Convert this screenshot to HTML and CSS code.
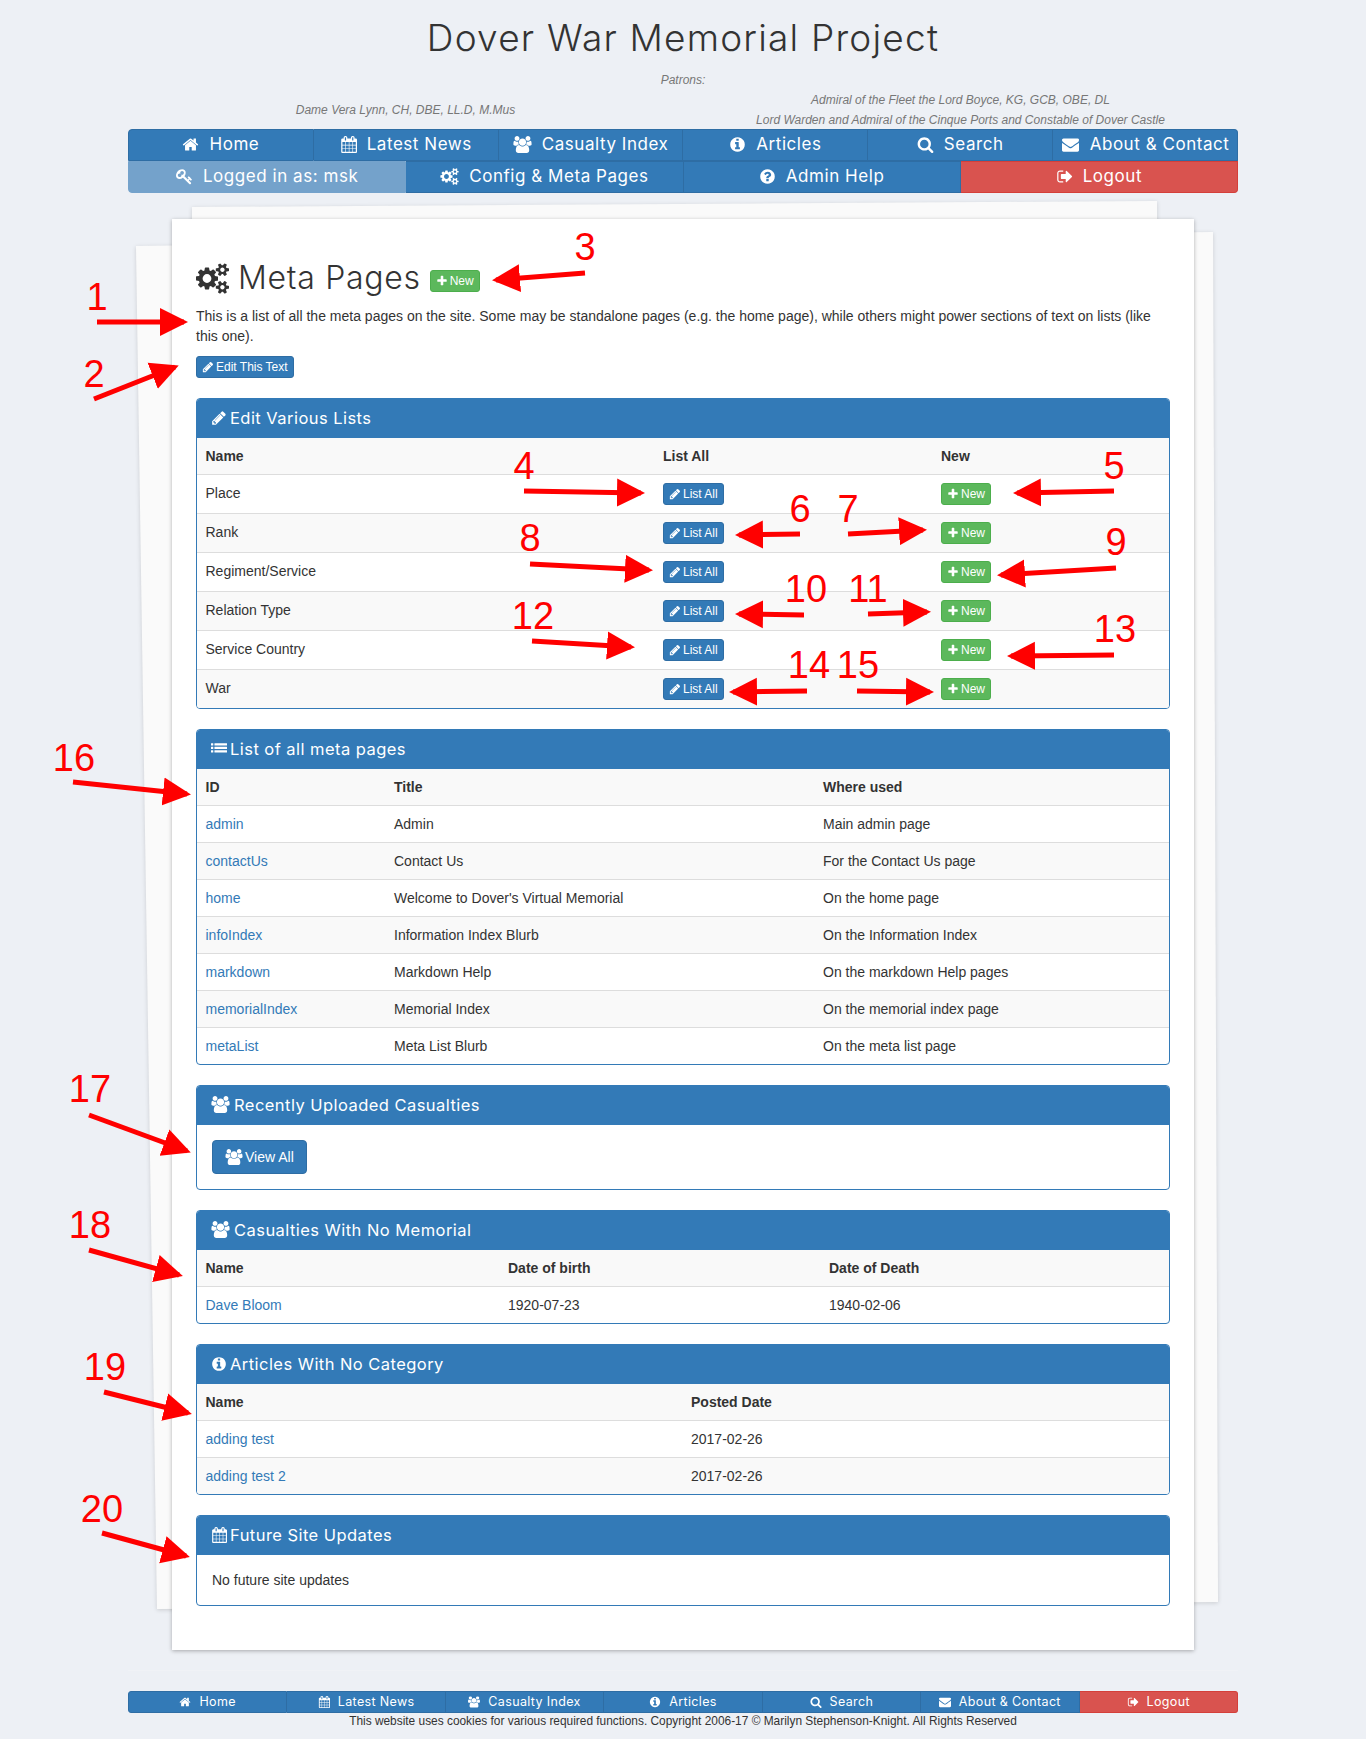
FILE: index.html
```html
<!DOCTYPE html>
<html lang="en">
<head>
<meta charset="utf-8">
<title>Dover War Memorial Project</title>
<link rel="stylesheet" href="styles.css">
</head>
<body>
<svg class="icon-defs" aria-hidden="true">
  <symbol id="i-home" viewBox="0 0 1792 1792"><path d="M1472 992v480q0 26-19 45t-45 19h-384v-384h-256v384h-384q-26 0-45-19t-19-45v-480q0-1 .5-3t.5-3l575-474 575 474q1 2 1 6zm223-69l-62 74q-8 9-21 11h-3q-13 0-21-7l-692-577-692 577q-12 8-24 7-13-2-21-11l-62-74q-8-10-7-23.5t11-21.5l719-599q32-26 76-26t76 26l244 204v-195q0-14 9-23t23-9h192q14 0 23 9t9 23v408l219 182q10 8 11 21.5t-7 23.5z"/></symbol>
  <symbol id="i-cal" viewBox="0 0 1664 1792"><path d="M192 1664h288v-288h-288v288zm352 0h320v-288h-320v288zm-352-352h288v-320h-288v320zm352 0h320v-320h-320v320zm-352-384h288v-288h-288v288zm736 736h320v-288h-320v288zm-384-736h320v-288h-320v288zm768 736h288v-288h-288v288zm-384-352h320v-320h-320v320zm-352-864v-288q0-13-9.5-22.5t-22.5-9.5h-64q-13 0-22.5 9.5t-9.5 22.5v288q0 13 9.5 22.5t22.5 9.5h64q13 0 22.5-9.5t9.5-22.5zm736 864h288v-320h-288v320zm-384-384h320v-288h-320v288zm384 0h288v-288h-288v288zm32-480v-288q0-13-9.5-22.5t-22.5-9.5h-64q-13 0-22.5 9.5t-9.5 22.5v288q0 13 9.5 22.5t22.5 9.5h64q13 0 22.5-9.5t9.5-22.5zm384-64v1280q0 52-38 90t-90 38h-1408q-52 0-90-38t-38-90v-1280q0-52 38-90t90-38h128v-96q0-66 47-113t113-47h64q66 0 113 47t47 113v96h384v-96q0-66 47-113t113-47h64q66 0 113 47t47 113v96h128q52 0 90 38t38 90z"/></symbol>
  <symbol id="i-users" viewBox="0 0 1920 1792"><path d="M593 896q-162 5-265 128h-134q-82 0-138-40.5t-56-118.5q0-353 124-353 6 0 43.5 21t97.5 42.5 119 21.5q67 0 133-23-5 37-5 66 0 139 81 256zm1071 637q0 120-73 189.5t-194 69.5h-874q-121 0-194-69.5t-73-189.5q0-53 3.5-103.5t14-109 26.5-108.5 43-97.5 62-81 85.5-53.5 111.5-20q10 0 43 21.5t73 48 107 48 135 21.5 135-21.5 107-48 73-48 43-21.5q61 0 111.5 20t85.5 53.5 62 81 43 97.5 26.5 108.5 14 109 3.5 103.5zm-1024-1277q0 106-75 181t-181 75-181-75-75-181 75-181 181-75 181 75 75 181zm704 384q0 159-112.5 271.5t-271.5 112.5-271.5-112.5-112.5-271.5 112.5-271.5 271.5-112.5 271.5 112.5 112.5 271.5zm576 225q0 78-56 118.5t-138 40.5h-134q-103-123-265-128 81-117 81-256 0-29-5-66 66 23 133 23 59 0 119-21.5t97.5-42.5 43.5-21q124 0 124 353zm-128-609q0 106-75 181t-181 75-181-75-75-181 75-181 181-75 181 75 75 181z"/></symbol>
  <symbol id="i-info" viewBox="0 0 1792 1792"><path d="M1152 1376v-160q0-14-9-23t-23-9h-96v-512q0-14-9-23t-23-9h-320q-14 0-23 9t-9 23v160q0 14 9 23t23 9h96v320h-96q-14 0-23 9t-9 23v160q0 14 9 23t23 9h448q14 0 23-9t9-23zm-128-896v-160q0-14-9-23t-23-9h-192q-14 0-23 9t-9 23v160q0 14 9 23t23 9h192q14 0 23-9t9-23zm640 416q0 209-103 385.5t-279.5 279.5-385.5 103-385.5-103-279.5-279.5-103-385.5 103-385.5 279.5-279.5 385.5-103 385.5 103 279.5 279.5 103 385.5z"/></symbol>
  <symbol id="i-search" viewBox="0 0 1792 1792"><path d="M1216 832q0-185-131.5-316.5t-316.5-131.5-316.5 131.5-131.5 316.5 131.5 316.5 316.5 131.5 316.5-131.5 131.5-316.5zm512 832q0 52-38 90t-90 38q-54 0-90-38l-343-342q-179 124-399 124-143 0-273.5-55.5t-225-150-150-225-55.5-273.5 55.5-273.5 150-225 225-150 273.5-55.5 273.5 55.5 225 150 150 225 55.5 273.5q0 220-124 399l343 343q37 37 37 90z"/></symbol>
  <symbol id="i-mail" viewBox="0 0 1792 1792"><path d="M1792 710v794q0 66-47 113t-113 47h-1472q-66 0-113-47t-47-113v-794q44 49 101 87 362 246 497 345 57 42 92.5 65.5t94.5 48 110 24.5h2q51 0 110-24.5t94.5-48 92.5-65.5q170-123 498-345 57-39 100-87zm0-294q0 79-49 151t-122 123q-376 261-468 325-10 7-42.5 30.5t-54 38-52 32.5-57.5 27-50 9h-2q-23 0-50-9t-57.5-27-52-32.5-54-38-42.5-30.5q-91-64-262-182.5t-205-142.5q-62-42-117-115.5t-55-136.5q0-78 41.5-130t118.5-52h1472q65 0 112.5 47t47.5 113z"/></symbol>
  <symbol id="i-key" viewBox="0 0 1792 1792"><path d="M832 512q0-80-56-136t-136-56-136 56-56 136q0 42 19 83-41-19-83-19-80 0-136 56t-56 136 56 136 136 56 136-56 56-136q0-42-19-83 41 19 83 19 80 0 136-56t56-136zm851 704q0 17-49 66t-66 49q-9 0-28.5-16t-36.5-33-38.5-40-24.5-26l-96 96 220 220q28 28 28 68 0 42-39 81t-81 39q-40 0-68-28l-671-671q-176 131-365 131-163 0-265.5-102.5t-102.5-265.5q0-160 95-313t248-248 313-95q163 0 265.5 102.5t102.5 265.5q0 189-131 365l355 355 96-96q-3-3-26-24.5t-40-38.5-33-36.5-16-28.5q0-17 49-66t66-49q13 0 23 10 6 6 46 44.5t82 79.5 86.5 86 73 78 28.5 41z"/></symbol>
  <symbol id="i-cogs" viewBox="0 0 1920 1792"><path d="M896 896q0-106-75-181t-181-75-181 75-75 181 75 181 181 75 181-75 75-181zm768 512q0-52-38-90t-90-38-90 38-38 90q0 53 37.5 90.5t90.5 37.5 90.5-37.5 37.5-90.5zm0-1024q0-52-38-90t-90-38-90 38-38 90q0 53 37.5 90.5t90.5 37.5 90.5-37.5 37.5-90.5zm-384 421v185q0 10-7 19.5t-16 10.5l-155 24q-11 35-32 76 34 48 90 115 7 11 7 20 0 12-7 19-23 30-82.5 89.5t-78.5 59.5q-11 0-21-7l-115-90q-37 19-77 31-11 108-23 155-7 24-30 24h-186q-11 0-20-7.5t-10-17.5l-23-153q-34-10-75-31l-118 89q-7 7-20 7-11 0-21-8-144-133-144-160 0-9 7-19 10-14 41-53t47-61q-23-44-35-82l-152-24q-10-1-17-9.5t-7-19.5v-185q0-10 7-19.5t16-10.5l155-24q11-35 32-76-34-48-90-115-7-11-7-20 0-12 7-20 22-30 82-89t79-59q11 0 21 7l115 90q34-18 77-32 11-108 23-154 7-24 30-24h186q11 0 20 7.5t10 17.5l23 153q34 10 75 31l118-89q8-7 20-7 11 0 21 8 144 133 144 160 0 8-7 19-12 16-42 54t-45 60q23 48 34 82l152 23q10 2 17 10.5t7 19.5zm640 533v140q0 16-149 31-12 27-30 52 51 113 51 138 0 4-4 7-122 71-124 71-8 0-46-47t-52-68q-20 2-30 2t-30-2q-14 21-52 68t-46 47q-2 0-124-71-4-3-4-7 0-25 51-138-18-25-30-52-149-15-149-31v-140q0-16 149-31 13-29 30-52-51-113-51-138 0-4 4-7 4-2 35-20t59-34 30-16q8 0 46 46.5t52 67.5q20-2 30-2t30 2q51-71 92-112l6-2q4 0 124 70 4 3 4 7 0 25-51 138 17 23 30 52 149 15 149 31zm0-1024v140q0 16-149 31-12 27-30 52 51 113 51 138 0 4-4 7-122 71-124 71-8 0-46-47t-52-68q-20 2-30 2t-30-2q-14 21-52 68t-46 47q-2 0-124-71-4-3-4-7 0-25 51-138-18-25-30-52-149-15-149-31v-140q0-16 149-31 13-29 30-52-51-113-51-138 0-4 4-7 4-2 35-20t59-34 30-16q8 0 46 46.5t52 67.5q20-2 30-2t30 2q51-71 92-112l6-2q4 0 124 70 4 3 4 7 0 25-51 138 17 23 30 52 149 15 149 31z"/></symbol>
  <symbol id="i-pencil" viewBox="0 0 1792 1792"><path d="M491 1536l91-91-235-235-91 91v107h128v128h107zm523-928q0-22-22-22-10 0-17 7l-542 542q-7 7-7 17 0 22 22 22 10 0 17-7l542-542q7-7 7-17zm-54-192l416 416-832 832h-416v-416zm683 96q0 53-37 90l-166 166-416-416 166-165q36-38 90-38 53 0 91 38l235 234q37 39 37 91z"/></symbol>
  <symbol id="i-plus" viewBox="0 0 1792 1792"><path d="M1600 736v192q0 40-28 68t-68 28h-416v416q0 40-28 68t-68 28h-192q-40 0-68-28t-28-68v-416h-416q-40 0-68-28t-28-68v-192q0-40 28-68t68-28h416v-416q0-40 28-68t68-28h192q40 0 68 28t28 68v416h416q40 0 68 28t28 68z"/></symbol>
  <symbol id="i-help" viewBox="0 0 1792 1792"><path d="M1024 1376v-192q0-14-9-23t-23-9h-192q-14 0-23 9t-9 23v192q0 14 9 23t23 9h192q14 0 23-9t9-23zm256-672q0-88-55.5-163t-138.5-116-170-41q-243 0-371 213-15 24 8 42l132 100q7 6 19 6 16 0 25-12 53-68 86-92 34-24 86-24 48 0 85.5 26t37.5 59q0 38-20 61t-68 45q-63 28-115.5 86.5t-52.5 125.5v36q0 14 9 23t23 9h192q14 0 23-9t9-23q0-19 21.5-49.5t54.5-49.5q32-18 49-28.5t46-35 44.5-48 28-60.5 12.5-81zm384 192q0 209-103 385.5t-279.5 279.5-385.5 103-385.5-103-279.5-279.5-103-385.5 103-385.5 279.5-279.5 385.5-103 385.5 103 279.5 279.5 103 385.5z"/></symbol>
  <symbol id="i-out" viewBox="0 0 1664 1792"><path d="M704 1440q0 4 1 20t.5 26.5-3 23.5-10 19.5-20.5 6.5h-320q-119 0-203.5-84.5t-84.5-203.5v-704q0-119 84.5-203.5t203.5-84.5h320q13 0 22.5 9.5t9.5 22.5q0 4 1 20t.5 26.5-3 23.5-10 19.5-20.5 6.5h-320q-66 0-113 47t-47 113v704q0 66 47 113t113 47h312l11.5 1 11.5 3 8 5.5 7 9 2 13.5zm928-544q0 26-19 45l-544 544q-19 19-45 19t-45-19-19-45v-288h-448q-26 0-45-19t-19-45v-384q0-26 19-45t45-19h448v-288q0-26 19-45t45-19 45 19l544 544q19 19 19 45z"/></symbol>
  <symbol id="i-list" viewBox="0 0 1792 1792"><rect y="256" width="256" height="256" rx="32"/><rect y="640" width="256" height="256" rx="32"/><rect y="1024" width="256" height="256" rx="32"/><rect x="384" y="256" width="1408" height="256" rx="32"/><rect x="384" y="640" width="1408" height="256" rx="32"/><rect x="384" y="1024" width="1408" height="256" rx="32"/></symbol>
</svg>

<svg class="back-sheets" viewBox="0 0 1366 1739" aria-hidden="true">
  <polygon points="136,246 1213,232 1218,1602 157,1609"/>
  <polygon points="192,207 1157,201 1158,1500 193,1500"/>
</svg>

<div class="site">
  <header class="masthead">
    <h1 class="site-title">Dover War Memorial Project</h1>
    <p class="patrons-label">Patrons:</p>
    <div class="patrons">
      <p class="patron">Dame Vera Lynn, CH, DBE, LL.D, M.Mus</p>
      <p class="patron">Admiral of the Fleet the Lord Boyce, KG, GCB, OBE, DL<br>Lord Warden and Admiral of the Cinque Ports and Constable of Dover Castle</p>
    </div>
  </header>

  <nav class="nav nav-main">
    <div class="nav-row">
      <a class="nav-item"><svg class="ic"><use href="#i-home"/></svg><span class="nav-label">Home</span></a>
      <a class="nav-item"><svg class="ic"><use href="#i-cal"/></svg><span class="nav-label">Latest News</span></a>
      <a class="nav-item"><svg class="ic ic-wide"><use href="#i-users"/></svg><span class="nav-label">Casualty Index</span></a>
      <a class="nav-item"><svg class="ic"><use href="#i-info"/></svg><span class="nav-label">Articles</span></a>
      <a class="nav-item"><svg class="ic"><use href="#i-search"/></svg><span class="nav-label">Search</span></a>
      <a class="nav-item"><svg class="ic ic-wide"><use href="#i-mail"/></svg><span class="nav-label">About &amp; Contact</span></a>
    </div>
    <div class="nav-row">
      <a class="nav-item nav-dim"><svg class="ic"><use href="#i-key"/></svg><span class="nav-label">Logged in as: msk</span></a>
      <a class="nav-item"><svg class="ic ic-wide"><use href="#i-cogs"/></svg><span class="nav-label">Config &amp; Meta Pages</span></a>
      <a class="nav-item"><svg class="ic"><use href="#i-help"/></svg><span class="nav-label">Admin Help</span></a>
      <a class="nav-item nav-danger"><svg class="ic"><use href="#i-out"/></svg><span class="nav-label">Logout</span></a>
    </div>
  </nav>

  <main class="paper">
    <h1 class="page-title"><svg class="title-icon"><use href="#i-cogs"/></svg><span class="page-title-text">Meta Pages</span><a class="btn btn-green"><svg class="bi"><use href="#i-plus"/></svg>New</a></h1>
    <p class="intro">This is a list of all the meta pages on the site. Some may be standalone pages (e.g. the home page), while others might power sections of text on lists (like this one).</p>
    <a class="btn btn-blue edit-text"><svg class="bi"><use href="#i-pencil"/></svg>Edit This Text</a>

    <section class="panel">
      <h3 class="panel-head"><svg class="hi"><use href="#i-pencil"/></svg>Edit Various Lists</h3>
      <table class="grid grid-lists">
        <colgroup><col class="c-458"><col class="c-278"><col></colgroup>
        <tbody>
          <tr><th>Name</th><th>List All</th><th>New</th></tr>
          <tr><td>Place</td><td><a class="btn btn-blue"><svg class="bi"><use href="#i-pencil"/></svg>List All</a></td><td><a class="btn btn-green"><svg class="bi"><use href="#i-plus"/></svg>New</a></td></tr>
          <tr><td>Rank</td><td><a class="btn btn-blue"><svg class="bi"><use href="#i-pencil"/></svg>List All</a></td><td><a class="btn btn-green"><svg class="bi"><use href="#i-plus"/></svg>New</a></td></tr>
          <tr><td>Regiment/Service</td><td><a class="btn btn-blue"><svg class="bi"><use href="#i-pencil"/></svg>List All</a></td><td><a class="btn btn-green"><svg class="bi"><use href="#i-plus"/></svg>New</a></td></tr>
          <tr><td>Relation Type</td><td><a class="btn btn-blue"><svg class="bi"><use href="#i-pencil"/></svg>List All</a></td><td><a class="btn btn-green"><svg class="bi"><use href="#i-plus"/></svg>New</a></td></tr>
          <tr><td>Service Country</td><td><a class="btn btn-blue"><svg class="bi"><use href="#i-pencil"/></svg>List All</a></td><td><a class="btn btn-green"><svg class="bi"><use href="#i-plus"/></svg>New</a></td></tr>
          <tr><td>War</td><td><a class="btn btn-blue"><svg class="bi"><use href="#i-pencil"/></svg>List All</a></td><td><a class="btn btn-green"><svg class="bi"><use href="#i-plus"/></svg>New</a></td></tr>
        </tbody>
      </table>
    </section>

    <section class="panel">
      <h3 class="panel-head"><svg class="hi"><use href="#i-list"/></svg>List of all meta pages</h3>
      <table class="grid">
        <colgroup><col class="c-188"><col class="c-429"><col></colgroup>
        <tbody>
          <tr><th>ID</th><th>Title</th><th>Where used</th></tr>
          <tr><td><a class="link">admin</a></td><td>Admin</td><td>Main admin page</td></tr>
          <tr><td><a class="link">contactUs</a></td><td>Contact Us</td><td>For the Contact Us page</td></tr>
          <tr><td><a class="link">home</a></td><td>Welcome to Dover's Virtual Memorial</td><td>On the home page</td></tr>
          <tr><td><a class="link">infoIndex</a></td><td>Information Index Blurb</td><td>On the Information Index</td></tr>
          <tr><td><a class="link">markdown</a></td><td>Markdown Help</td><td>On the markdown Help pages</td></tr>
          <tr><td><a class="link">memorialIndex</a></td><td>Memorial Index</td><td>On the memorial index page</td></tr>
          <tr><td><a class="link">metaList</a></td><td>Meta List Blurb</td><td>On the meta list page</td></tr>
        </tbody>
      </table>
    </section>

    <section class="panel">
      <h3 class="panel-head"><svg class="hi hi-wide"><use href="#i-users"/></svg>Recently Uploaded Casualties</h3>
      <div class="panel-body"><a class="btn btn-blue btn-md"><svg class="mi"><use href="#i-users"/></svg>View All</a></div>
    </section>

    <section class="panel">
      <h3 class="panel-head"><svg class="hi hi-wide"><use href="#i-users"/></svg>Casualties With No Memorial</h3>
      <table class="grid">
        <colgroup><col class="c-303"><col class="c-321"><col></colgroup>
        <tbody>
          <tr><th>Name</th><th>Date of birth</th><th>Date of Death</th></tr>
          <tr><td><a class="link">Dave Bloom</a></td><td>1920-07-23</td><td>1940-02-06</td></tr>
        </tbody>
      </table>
    </section>

    <section class="panel">
      <h3 class="panel-head"><svg class="hi"><use href="#i-info"/></svg>Articles With No Category</h3>
      <table class="grid">
        <colgroup><col class="c-486"><col></colgroup>
        <tbody>
          <tr><th>Name</th><th>Posted Date</th></tr>
          <tr><td><a class="link">adding test</a></td><td>2017-02-26</td></tr>
          <tr><td><a class="link">adding test 2</a></td><td>2017-02-26</td></tr>
        </tbody>
      </table>
    </section>

    <section class="panel">
      <h3 class="panel-head"><svg class="hi"><use href="#i-cal"/></svg>Future Site Updates</h3>
      <div class="panel-body">No future site updates</div>
    </section>
  </main>

  <footer class="foot">
    <hr class="foot-rule">
    <nav class="nav nav-foot">
      <div class="nav-row">
        <a class="nav-item"><svg class="ic"><use href="#i-home"/></svg><span class="nav-label">Home</span></a>
        <a class="nav-item"><svg class="ic"><use href="#i-cal"/></svg><span class="nav-label">Latest News</span></a>
        <a class="nav-item"><svg class="ic ic-wide"><use href="#i-users"/></svg><span class="nav-label">Casualty Index</span></a>
        <a class="nav-item"><svg class="ic"><use href="#i-info"/></svg><span class="nav-label">Articles</span></a>
        <a class="nav-item"><svg class="ic"><use href="#i-search"/></svg><span class="nav-label">Search</span></a>
        <a class="nav-item"><svg class="ic"><use href="#i-mail"/></svg><span class="nav-label">About &amp; Contact</span></a>
        <a class="nav-item nav-danger"><svg class="ic"><use href="#i-out"/></svg><span class="nav-label">Logout</span></a>
      </div>
    </nav>
    <p class="copyright">This website uses cookies for various required functions. Copyright 2006-17 © Marilyn Stephenson-Knight. All Rights Reserved</p>
  </footer>
</div>

<svg class="annotations" viewBox="0 0 1366 1739" aria-hidden="true">
  <defs>
    <marker id="ah" markerUnits="userSpaceOnUse" markerWidth="30" markerHeight="30" refX="24" refY="15" orient="auto"><path d="M0 1L28 15L0 29z" fill="#f00"/></marker>
  </defs>
  <line class="arrow" x1="97" y1="322" x2="184" y2="322"/><text class="num" x="97" y="310">1</text>
  <line class="arrow" x1="94" y1="399" x2="175" y2="367"/><text class="num" x="94" y="387">2</text>
  <line class="arrow" x1="585" y1="273" x2="496" y2="280"/><text class="num" x="585" y="260">3</text>
  <line class="arrow" x1="524" y1="491" x2="641" y2="493"/><text class="num" x="524" y="479">4</text>
  <line class="arrow" x1="1114" y1="491" x2="1017" y2="493"/><text class="num" x="1114" y="479">5</text>
  <line class="arrow" x1="800" y1="534" x2="739" y2="535"/><text class="num" x="800" y="522">6</text>
  <line class="arrow" x1="848" y1="534" x2="923" y2="530"/><text class="num" x="848" y="522">7</text>
  <line class="arrow" x1="530" y1="564" x2="649" y2="570"/><text class="num" x="530" y="551">8</text>
  <line class="arrow" x1="1116" y1="568" x2="1001" y2="575"/><text class="num" x="1116" y="555">9</text>
  <line class="arrow" x1="804" y1="615" x2="739" y2="614"/><text class="num" x="806" y="602">10</text>
  <line class="arrow" x1="868" y1="614" x2="927" y2="612"/><text class="num" x="868" y="602">11</text>
  <line class="arrow" x1="532" y1="641" x2="631" y2="647"/><text class="num" x="533" y="629">12</text>
  <line class="arrow" x1="1114" y1="655" x2="1011" y2="656"/><text class="num" x="1115" y="642">13</text>
  <line class="arrow" x1="807" y1="691" x2="733" y2="692"/><text class="num" x="809" y="678">14</text>
  <line class="arrow" x1="857" y1="691" x2="930" y2="692"/><text class="num" x="858" y="678">15</text>
  <line class="arrow" x1="73" y1="782" x2="187" y2="794"/><text class="num" x="74" y="771">16</text>
  <line class="arrow" x1="89" y1="1115" x2="187" y2="1151"/><text class="num" x="90" y="1102">17</text>
  <line class="arrow" x1="89" y1="1250" x2="179" y2="1275"/><text class="num" x="90" y="1238">18</text>
  <line class="arrow" x1="104" y1="1392" x2="188" y2="1413"/><text class="num" x="105" y="1380">19</text>
  <line class="arrow" x1="102" y1="1533" x2="186" y2="1556"/><text class="num" x="102" y="1522">20</text>
</svg>
</body>
</html>
```

FILE: styles.css
```css
* { box-sizing: border-box; }
html, body { margin: 0; padding: 0; }
body {
  position: relative;
  min-height: 1739px;
  background: #edf0f5;
  color: #333;
  font: 14px/20px "Liberation Sans", Arial, sans-serif;
}
.icon-defs { position: absolute; width: 0; height: 0; overflow: hidden; }
.back-sheets {
  position: absolute; left: 0; top: 0; width: 1366px; height: 1739px;
  fill: #fafafa;
  filter: drop-shadow(0 1px 2px rgba(0,0,0,.15));
}
.annotations { position: absolute; left: 0; top: 0; width: 1366px; height: 1739px; pointer-events: none; }
.arrow { stroke: #f00; stroke-width: 5; marker-end: url(#ah); }
.num { fill: #f00; font: 38px "Liberation Sans", Arial, sans-serif; text-anchor: middle; }

.site { position: relative; width: 1110px; margin: 0 auto; }

.masthead { text-align: center; }
.site-title {
  margin: 0; padding-top: 14px; height: 70px;
  font: 300 37px/48px Inter, sans-serif; letter-spacing: 1.2px; color: #333;
}
.patrons-label, .patron { margin: 0; font-size: 12px; font-style: italic; color: #777; line-height: 20px; }
.patrons-label { height: 20px; }
.patrons { display: grid; grid-template-columns: 555px 555px; align-items: center; height: 39px; }

.nav-row { display: flex; }
.nav-item {
  flex: 1 1 0; display: flex; align-items: center; justify-content: center; white-space: nowrap;
  background: #337ab7; border: 1px solid #2e6da4; border-left-width: 0; color: #fff;
  font-family: Inter, sans-serif; font-weight: 400;
}
.nav-item:first-child { border-left-width: 1px; }
.nav-dim { background: #74a2cb; border-color: #74a2cb; }
.nav-danger { background: #d9534f; border-color: #d43f3a; }
.nav-main .nav-row { height: 32px; }
.nav-main .nav-item { font-size: 17px; letter-spacing: .55px; }
.nav-main .nav-label { margin-bottom: 3px; }
.nav-main .ic { width: 17px; height: 17px; margin: 0 10px 1px 0; fill: #fff; }
.nav-main .ic-wide { width: 19px; }
.nav-main .nav-row:first-child .nav-item:first-child { border-top-left-radius: 4px; }
.nav-main .nav-row:first-child .nav-item:last-child { border-top-right-radius: 4px; }
.nav-main .nav-row:last-child .nav-item:first-child { border-bottom-left-radius: 4px; }
.nav-main .nav-row:last-child .nav-item:last-child { border-bottom-right-radius: 4px; }

.paper {
  position: relative;
  width: 1022px; margin: 26px auto 0; padding: 37px 24px 24px;
  background: #fff;
  box-shadow: 0 1px 4px rgba(0,0,0,.3);
}
.page-title {
  display: flex; align-items: center; height: 44px; margin: 0 0 6px;
  font: 300 32px/44px Inter, sans-serif; letter-spacing: .7px; color: #333;
}
.title-icon { width: 33px; height: 31px; margin-right: 9px; fill: #333; }
.page-title .btn { margin: 5px 0 0 9px; letter-spacing: 0; }
.intro { margin: 0 0 10px; }
.edit-text { margin-bottom: 20px; }

.btn {
  display: inline-flex; align-items: center; height: 22px; padding: 0 5px;
  border: 1px solid; border-radius: 3px; color: #fff; font: 12px/18px "Liberation Sans", Arial, sans-serif;
  vertical-align: top; white-space: nowrap;
}
.btn-blue { background: #337ab7; border-color: #2e6da4; }
.btn-green { background: #5cb85c; border-color: #4cae4c; }
.bi { width: 12px; height: 12px; margin-right: 2px; fill: #fff; }
.btn-md { height: 34px; padding: 0 12px; border-radius: 4px; font-size: 14px; }
.mi { width: 18px; height: 16px; margin-right: 2px; fill: #fff; }

.panel {
  margin-bottom: 20px; border: 1px solid #337ab7; border-radius: 4px; overflow: hidden; background: #fff;
}
.panel-head {
  display: flex; align-items: center; height: 39px; margin: 0; padding: 0 15px 2px 14px;
  background: #337ab7; color: #fff;
  font: 400 16.5px/20px Inter, sans-serif; letter-spacing: .45px;
}
.hi { width: 16px; height: 16px; margin-right: 3px; fill: #fff; }
.hi-wide { width: 19px; height: 17px; margin-right: 4px; }
.panel-body { padding: 15px; }

.grid { width: 100%; border-collapse: separate; border-spacing: 0; table-layout: fixed; }
.grid th, .grid td { padding: 8px; text-align: left; vertical-align: top; line-height: 20px; border-top: 1px solid #ddd; }
.grid th:first-child, .grid td:first-child { padding-left: 8.5px; }
.grid tr:first-child th { border-top: 0; }
.grid th { font-weight: 700; }
.grid tbody tr:nth-child(odd) { background: #f9f9f9; }
.link { color: #337ab7; }
.c-458 { width: 458px; }
.c-278 { width: 278px; }
.c-188 { width: 189px; }
.c-429 { width: 429px; }
.c-303 { width: 303px; }
.c-321 { width: 321px; }
.c-486 { width: 486px; }

.foot-rule { height: 1px; margin: 20px 0; border: 0; background: #f0f2f6; }
.nav-foot .nav-row { height: 22px; }
.nav-foot .nav-item { font-size: 12.5px; letter-spacing: .35px; }
.nav-foot .ic { width: 12px; height: 12px; margin-right: 8px; fill: #fff; }
.nav-foot .nav-item:first-child { border-top-left-radius: 3px; border-bottom-left-radius: 3px; }
.nav-foot .nav-item:last-child { border-top-right-radius: 3px; border-bottom-right-radius: 3px; }
.copyright { margin: 0; text-align: center; font-size: 11.9px; line-height: 17px; }
```
